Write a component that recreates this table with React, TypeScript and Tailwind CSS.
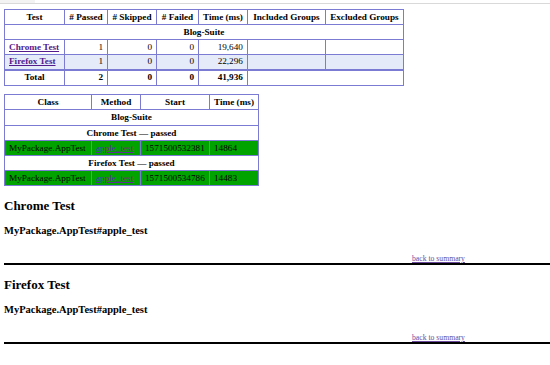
import React from "react";

const cell = "border border-[#7b7bd3] h-[15px] px-[4px] py-0 leading-[11px] whitespace-nowrap";
const th = `${cell} font-bold text-center`;
const num = `${cell} text-right`;

type SuiteRow = { name: string; passed: number; skipped: number; failed: number; time: string; stripe?: boolean };

const suiteRows: SuiteRow[] = [
  { name: "Chrome Test", passed: 1, skipped: 0, failed: 0, time: "19,640" },
  { name: "Firefox Test", passed: 1, skipped: 0, failed: 0, time: "22,296", stripe: true },
];

const methodRows = [
  { test: "Chrome Test", start: "1571500532381", time: "14864" },
  { test: "Firefox Test", start: "1571500534786", time: "14483" },
];

function Section({ title }: { title: string }) {
  return (
    <div>
      <h2 className="mt-[12px] text-[13px] leading-[16px] font-bold">{title}</h2>
      <h3 className="mt-[10px] text-[10.5px] leading-[13px] font-bold">MyPackage.AppTest#apple_test</h3>
      <p className="mt-[17px] border-b-2 border-black pl-[408px] text-[7.7px] leading-[9px]">
        <a href="#summary" className="text-[#6b4a9e] underline">back to summary</a>
      </p>
    </div>
  );
}

export default function App() {
  return (
    <div className="w-[550px] h-[365px] bg-white overflow-hidden text-black" style={{ fontFamily: '"Liberation Serif", "Times New Roman", serif' }}>
      <div className="h-[3px] w-[35px] bg-[#f3f3f3]" />
      <div className="h-px bg-[#d9d9d9]" />
      <div className="pl-[4px] pt-[5px]">
        <table className="border-collapse text-[9.2px] mb-[8px]" id="summary">
          <colgroup>
            <col className="w-[60px]" />
            <col className="w-[43px]" />
            <col className="w-[49px]" />
            <col className="w-[42px]" />
            <col className="w-[47px]" />
            <col className="w-[78px]" />
            <col className="w-[78px]" />
          </colgroup>
          <tbody>
            <tr>
              <th className={th}>Test</th>
              <th className={th}># Passed</th>
              <th className={th}># Skipped</th>
              <th className={th}># Failed</th>
              <th className={th}>Time (ms)</th>
              <th className={th}>Included Groups</th>
              <th className={th}>Excluded Groups</th>
            </tr>
            <tr>
              <th colSpan={7} className={`${th} h-[15.5px]`}>Blog-Suite</th>
            </tr>
            {suiteRows.map((r) => (
              <tr key={r.name} className={r.stripe ? "bg-[#e6ebf9]" : ""}>
                <td className={`${cell} h-[15.5px]`}>
                  <a href="#" className="font-bold text-[#551a8b] underline">{r.name}</a>
                </td>
                <td className={num}>{r.passed}</td>
                <td className={num}>{r.skipped}</td>
                <td className={num}>{r.failed}</td>
                <td className={num}>{r.time}</td>
                <td className={cell}></td>
                <td className={cell}></td>
              </tr>
            ))}
            <tr className="font-bold">
              <td className={`${cell} h-[16px] text-center border-t-2`}>Total</td>
              <td className={`${num} h-[16px] border-t-2`}>2</td>
              <td className={`${num} h-[16px] border-t-2`}>0</td>
              <td className={`${num} h-[16px] border-t-2`}>0</td>
              <td className={`${num} h-[16px] border-t-2`}>41,936</td>
              <td colSpan={2} className={`${cell} h-[16px] border-t-2`}></td>
            </tr>
          </tbody>
        </table>

        <table className="border-collapse text-[9.2px]">
          <colgroup>
            <col className="w-[87px]" />
            <col className="w-[49px]" />
            <col className="w-[69px]" />
            <col className="w-[49px]" />
          </colgroup>
          <tbody>
            <tr>
              <th className={th}>Class</th>
              <th className={th}>Method</th>
              <th className={th}>Start</th>
              <th className={th}>Time (ms)</th>
            </tr>
            <tr>
              <th colSpan={4} className={`${th} h-[16px]`}>Blog-Suite</th>
            </tr>
            {methodRows.map((m) => (
              <React.Fragment key={m.test}>
                <tr>
                  <th colSpan={4} className={`${th} h-[15.5px]`}>{m.test} — passed</th>
                </tr>
                <tr className="bg-[#00a300]">
                  <td className={cell}>MyPackage.AppTest</td>
                  <td className={cell}>
                    <a href="#" className="text-[#5a2f96] underline">apple_test</a>
                  </td>
                  <td className={cell}>{m.start}</td>
                  <td className={cell}>{m.time}</td>
                </tr>
              </React.Fragment>
            ))}
          </tbody>
        </table>

        <Section title="Chrome Test" />
        <Section title="Firefox Test" />
      </div>
    </div>
  );
}
